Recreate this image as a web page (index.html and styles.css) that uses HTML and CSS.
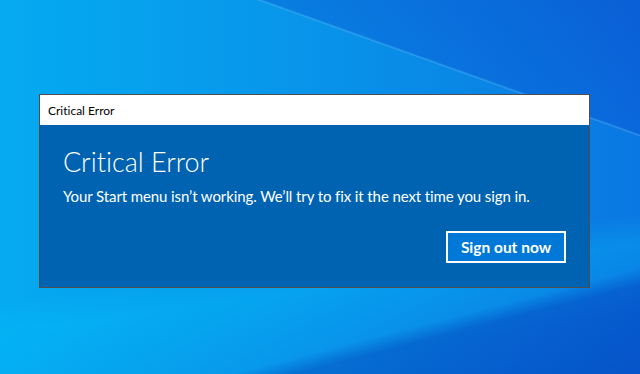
FILE: index.html
```html
<!DOCTYPE html>
<html>
<head>
    <meta charset="utf-8">
    <title>Critical Error</title>
    <link rel="stylesheet" href="styles.css">
</head>
<body>
    <div class="desktop">
        <div class="dialog">
            <div class="titlebar">Critical Error</div>
            <div class="content">
                <h1>Critical Error</h1>
                <p>Your Start menu isn’t working. We’ll try to fix it the next time you sign in.</p>
                <div class="actions">
                    <button class="button">Sign out now</button>
                </div>
            </div>
        </div>
    </div>
</body>
</html>
```

FILE: styles.css
```css
html,
body {
    margin: 0;
    height: 100%;
}

body {
    font-family: Lato, "Open Sans", sans-serif;
    font-variant-ligatures: none;
    overflow: hidden;
}

.desktop {
    height: 100%;
    padding: 94px 0 0 39px;
    box-sizing: border-box;
    background:
        linear-gradient(19.6deg, transparent 438px, rgba(120, 200, 255, 0.3) 439px, rgba(10, 60, 200, 0.28) 441px, rgba(10, 50, 190, 0.35) 100%),
        linear-gradient(165.5deg, transparent 420px, rgba(0, 40, 170, 0.35) 436px, rgba(0, 40, 170, 0.45) 100%),
        linear-gradient(172deg, transparent 300px, rgba(0, 200, 255, 0.25) 330px, transparent 400px),
        linear-gradient(to right, #05abf1 0%, #0896ea 45%, #0a78e2 100%);
}

.dialog {
    width: 549px;
    border: 1px solid #4d4d4d;
    background: #0063b1;
}

.titlebar {
    height: 30px;
    line-height: 31px;
    background: #fff;
    color: #000;
    font-size: 12px;
    padding-left: 8px;
}

.content {
    padding: 17px 23px 24px 23px;
    color: #fff;
}

h1 {
    font-size: 27px;
    font-weight: 300;
    margin: 0;
    line-height: 40px;
}

p {
    font-size: 15px;
    letter-spacing: -0.1px;
    margin: 3px 0 0 0;
    line-height: 22px;
}

.actions {
    display: flex;
    justify-content: flex-end;
    margin-top: 24px;
}

.button {
    font-family: inherit;
    background: #0078d7;
    color: #fff;
    border: 2px solid #fff;
    width: 120px;
    height: 32px;
    font-size: 15.5px;
    font-weight: 700;
    padding: 0;
    cursor: pointer;
}
```
